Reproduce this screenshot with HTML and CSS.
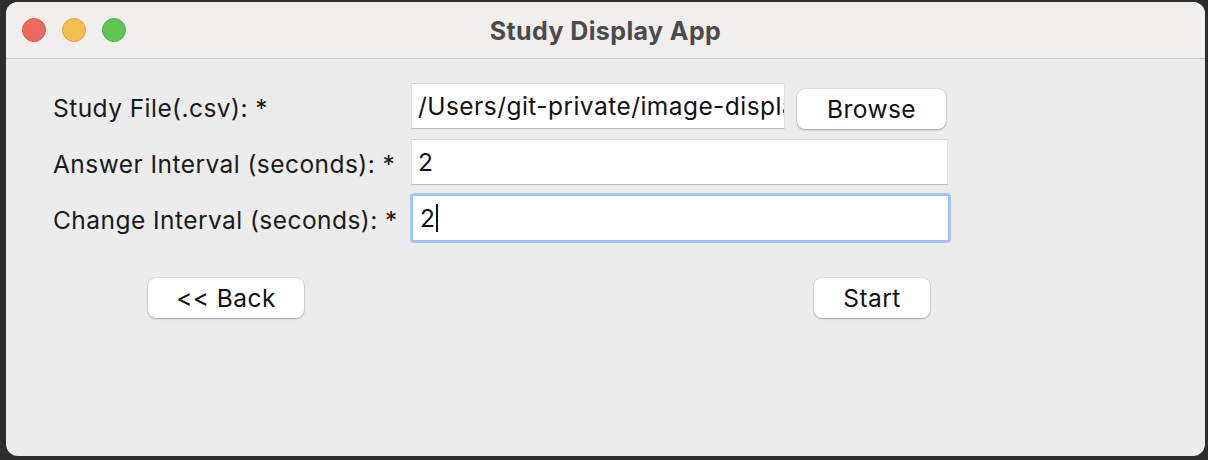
FILE: index.html
```html
<!DOCTYPE html>
<html>
<head>
<meta charset="utf-8">
<link rel="stylesheet" href="styles.css">
</head>
<body>
<div class="window">
  <div class="titlebar">
    <div class="lights">
      <span class="light red"></span>
      <span class="light yellow"></span>
      <span class="light green"></span>
    </div>
    <div class="title">Study Display App</div>
    <div></div>
  </div>
  <div class="content">
    <div class="form">
      <label class="label">Study File(.csv): *</label>
      <div class="filerow">
        <div class="input file"><span class="val clip">/Users/git-private/image-display</span></div>
        <button class="btn browse">Browse</button>
      </div>
      <label class="label">Answer Interval (seconds): *</label>
      <div class="input"><span class="val">2</span></div>
      <label class="label">Change Interval (seconds): *</label>
      <div class="input focus"><span class="val">2</span><span class="caret"></span></div>
    </div>
    <div class="actions">
      <button class="btn back">&lt;&lt; Back</button>
      <button class="btn start">Start</button>
    </div>
  </div>
</div>
</body>
</html>
```
FILE: styles.css
```css
html, body {
  margin: 0;
  padding: 0;
}
body {
  width: 1208px;
  height: 460px;
  background: #2d2d2d;
  font-family: Inter, "Liberation Sans", Arial, sans-serif;
  overflow: hidden;
}
.window {
  margin: 2px 0 0 6px;
  width: 1199px;
  height: 454px;
  border-radius: 12px;
  background: #ececec;
  overflow: hidden;
  display: flex;
  flex-direction: column;
}
.titlebar {
  height: 56px;
  background: #f0efed;
  border-bottom: 1px solid #c9c8c6;
  display: grid;
  grid-template-columns: 1fr auto 1fr;
  align-items: center;
}
.lights {
  display: flex;
  gap: 16px;
  padding-left: 16px;
}
.light {
  width: 24px;
  height: 24px;
  border-radius: 50%;
  box-sizing: border-box;
}
.red { background: #ed6a5e; border: 1px solid #d5574c; }
.yellow { background: #f5bf4f; border: 1px solid #d9a23c; }
.green { background: #61c554; border: 1px solid #4fae44; }
.title {
  font-weight: 700;
  font-size: 25px;
  letter-spacing: 0.4px;
  color: #4b4b4b;
  padding-top: 1px;
}
.content {
  flex: 1;
  padding: 24px 0 0 47px;
}
.form {
  display: grid;
  grid-template-columns: 358px 537px;
  row-gap: 10px;
  align-items: center;
}
.label {
  font-size: 24.5px;
  letter-spacing: 0.45px;
  color: #1a1a1a;
  padding-top: 3px;
}
.filerow {
  display: flex;
  align-items: flex-start;
  gap: 12px;
}
.input {
  height: 46px;
  box-sizing: border-box;
  background: #fff;
  border-top: 1px solid #d2d2d2;
  border-left: 1px solid #e2e2e2;
  border-right: 1px solid #e2e2e2;
  border-bottom: 1px solid #bdbdbd;
  display: flex;
  align-items: center;
  padding-left: 6px;
  font-size: 24.5px;
  letter-spacing: 0.45px;
  color: #111;
  overflow: hidden;
  white-space: nowrap;
}
.val.clip {
  flex: 1;
  min-width: 0;
  overflow: hidden;
}
.input.file {
  width: 374px;
  flex: none;
}
.input.focus {
  border: 1px solid #9ebbee;
  box-shadow: 0 0 0 2px #a9c6f3;
  border-radius: 2px;
  margin-left: 1px;
  margin-right: -1px;
  padding-left: 7px;
}
.caret {
  display: inline-block;
  width: 1.5px;
  height: 28px;
  background: #111;
  margin-left: 1px;
}
.btn {
  height: 40px;
  box-sizing: border-box;
  background: #fff;
  border: none;
  border-radius: 8px;
  box-shadow: 0 0 0 0.5px rgba(0,0,0,0.12), 0 1px 2px rgba(0,0,0,0.28);
  font-family: Inter, "Liberation Sans", Arial, sans-serif;
  font-size: 24.5px;
  letter-spacing: 0.45px;
  color: #111;
  padding: 0;
}
.browse {
  width: 149px;
  margin-top: 6px;
}
.actions {
  display: flex;
  padding: 37px 0 0 95px;
  gap: 510px;
}
.back { width: 156px; }
.start { width: 116px; }
```
